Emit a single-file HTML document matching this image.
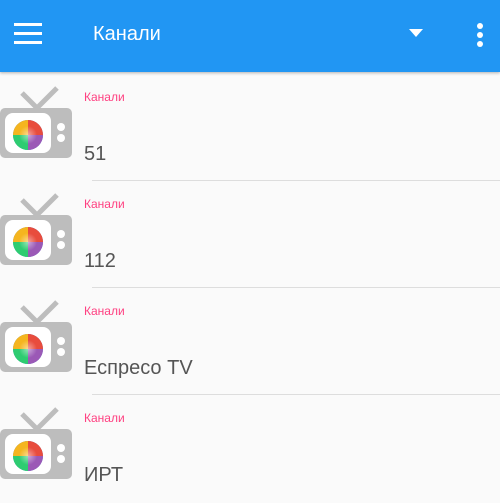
<html><head><style>
body{margin:0;width:500px;height:500px;overflow:hidden;background:#fafafa;font-family:"Liberation Sans",sans-serif}
.bar{position:absolute;left:0;top:0;width:500px;height:72px;background:#2196f3;box-shadow:0 1px 3px rgba(0,0,0,.3)}
.row{position:absolute;left:0;width:500px;height:107px}
.lab{position:absolute;left:84px;top:15px;font-size:12px;color:#ff4081}
.ttl{position:absolute;left:84px;top:68px;font-size:20px;color:#555}
.div{position:absolute;left:92px;right:0;top:105px;height:1px;background:#ddd}
svg{position:absolute;left:0;top:10px}
</style></head><body>
<div class="bar">
<div style="position:absolute;left:14px;top:23px;width:28px;height:3px;background:#fff;box-shadow:0 9px 0 #fff,0 18px 0 #fff"></div>
<div style="position:absolute;left:93px;top:23px;color:#fff;font-size:20px">Канали</div>
<div style="position:absolute;left:409px;top:29px;width:0;height:0;border-left:7px solid transparent;border-right:7px solid transparent;border-top:8px solid #fff"></div>
<div style="position:absolute;left:477px;top:23px;width:6px;height:6px;border-radius:3px;background:#fff;box-shadow:0 9px 0 #fff,0 18px 0 #fff"></div>
</div>
<script>
const names=["51","112","Еспресо TV","ИРТ"];
let h="";
names.forEach((n,i)=>{h+=`<div class="row" style="top:${75+i*107}px">
<svg width="76" height="80" viewBox="0 0 76 80"><defs><radialGradient id="g${i}"><stop offset="0" stop-color="#fff"/><stop offset="1" stop-color="#fff" stop-opacity="0"/></radialGradient></defs>
<path d="M22 8 L37 23 L57 3" stroke="#bdbdbd" stroke-width="5" fill="none"/>
<rect x="0" y="23" width="72" height="50" rx="5" fill="#bdbdbd"/>
<rect x="5" y="28" width="46" height="40" rx="8" fill="#fff"/>
<circle cx="28" cy="50" r="15" fill="#4a90e2"/>
<path d="M28 50 L28 35 A15 15 0 0 1 43 50 Z" fill="#e84c3d"/>
<path d="M28 50 L43 50 A15 15 0 0 1 28 65 Z" fill="#9b59b6"/>
<path d="M28 50 L28 65 A15 15 0 0 1 13 50 Z" fill="#2ecc71"/>
<path d="M28 50 L13 50 A15 15 0 0 1 28 35 Z" fill="#f5b51f"/>
<circle cx="28" cy="50" r="9" fill="url(#g${i})" opacity=".5"/>
<circle cx="61" cy="42" r="4" fill="#fff"/><circle cx="61" cy="53" r="4" fill="#fff"/></svg>
<div class="lab">Канали</div><div class="ttl">${n}</div>${i<3?'<div class="div"></div>':''}</div>`});
document.write(h);
</script>
</body></html>
